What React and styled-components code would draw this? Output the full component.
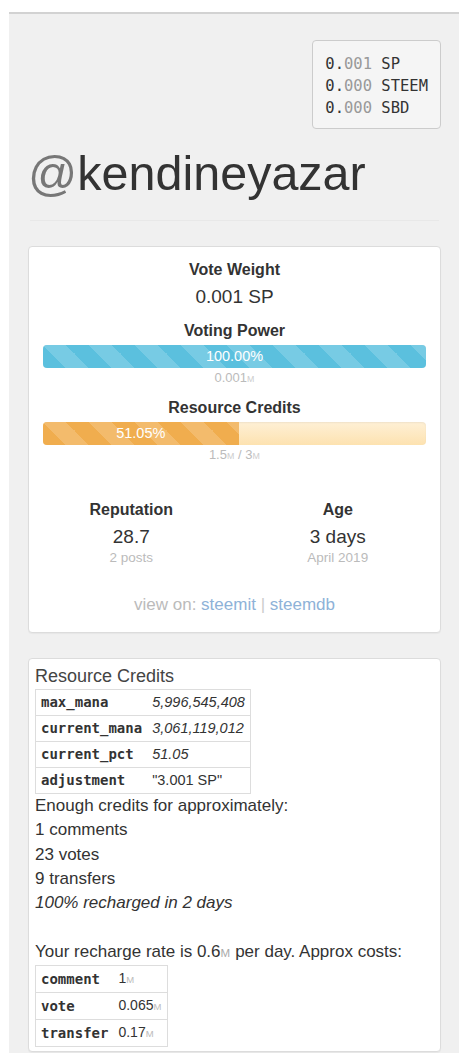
import React from "react";
import styled, { createGlobalStyle, css } from "styled-components";

const Global = createGlobalStyle`
  html, body { margin: 0; padding: 0; background: #fff; }
  body { font-family: "Liberation Sans", Arial, sans-serif; color: #333; }
  * { box-sizing: border-box; }
`;

const Page = styled.div`
  margin: 12px 9px 0;
  background: #f0f0f0;
  border-top: 2px solid #d2d2d2;
  padding: 0 18px 30px 19px;
  display: flex;
  flex-direction: column;
  min-height: 1060px;
`;

const Wallet = styled.div`
  align-self: flex-end;
  margin-top: 26px;
  padding: 12px 12px 9px;
  background: #f5f5f5;
  border: 1px solid #ccc;
  border-radius: 4px;
  font-family: "DejaVu Sans Mono", monospace;
  font-size: 15.5px;
  line-height: 22px;
  color: #333;
`;

const WalletLine = styled.div`
  white-space: pre;
`;

const Dim = styled.span`
  color: #999;
`;

const Title = styled.h1`
  margin: 18px 0 0;
  font-size: 48.5px;
  line-height: 53px;
  font-weight: normal;
  color: #333;
`;

const At = styled.span`
  color: #777;
`;

const Rule = styled.hr`
  margin: 20px 2px 0;
  border: 0;
  border-top: 1px solid #e8e8e8;
  height: 0;
`;

const Card = styled.div`
  margin-top: 25px;
  background: #fff;
  border: 1px solid #dcdcdc;
  border-radius: 4px;
  box-shadow: 0 1px 1px rgba(0, 0, 0, 0.04);
`;

const StatsCard = styled(Card)`
  padding: 12px 14px 17px;
  text-align: center;
`;

const Label = styled.div`
  font-weight: bold;
  font-size: 16px;
  line-height: 22px;
  color: #333;
  margin-top: ${(p) => p.$gap || 0}px;
`;

const Value = styled.div`
  font-size: 19px;
  line-height: 24px;
  color: #333;
  margin-top: 4px;
`;

const Sub = styled.div`
  font-size: 13px;
  line-height: 16px;
  color: #bbb;
  margin-top: 2px;
`;

const Unit = styled.span`
  font-size: 0.68em;
  color: ${(p) => p.$color || "#ccc"};
  letter-spacing: 0.02em;
`;

const stripes = css`
  background-image: linear-gradient(
    45deg,
    rgba(255, 255, 255, 0.17) 25%,
    transparent 25%,
    transparent 50%,
    rgba(255, 255, 255, 0.17) 50%,
    rgba(255, 255, 255, 0.17) 75%,
    transparent 75%,
    transparent
  );
  background-size: 46px 46px;
`;

const Bar = styled.div`
  margin-top: 3px;
  height: 23px;
  border-radius: 4px;
  overflow: hidden;
  display: flex;
  background: ${(p) => p.$track || "#f5f5f5"};
  box-shadow: inset 0 1px 2px rgba(0, 0, 0, 0.06);
`;

const Fill = styled.div`
  height: 100%;
  background-color: ${(p) => p.$color};
  ${stripes};
  color: #fff;
  font-size: 14.5px;
  line-height: 23px;
  text-align: center;
`;

const StatsRow = styled.div`
  display: grid;
  grid-template-columns: 1fr 1fr;
  margin: 35px -15px 0;
`;

const Stat = styled.div`
  text-align: center;
`;

const Note = styled.div`
  font-size: 13.5px;
  line-height: 18px;
  color: #bbb;
`;

const ViewOn = styled.div`
  margin-top: 28px;
  font-size: 17px;
  line-height: 20px;
  color: #bbb;
`;

const Link = styled.a`
  color: #8eb2d8;
  text-decoration: none;
`;

const Sep = styled.span`
  color: #ccc;
`;

const RcCard = styled(Card)`
  padding: 6px 6px 4px;
  font-size: 17px;
  line-height: 24.3px;
  color: #333;
`;

const RcTitle = styled.div`
  font-size: 18px;
  line-height: 22px;
  color: #444;
`;

const Table = styled.table`
  border-collapse: collapse;
  margin-top: ${(p) => p.$gap || 0}px;
  border: 1px solid #ddd;
`;

const Row = styled.tr`
  border-top: 1px solid #ddd;
  border-bottom: 1px solid #ddd;
`;

const Key = styled.td`
  padding: 2px 5px;
  line-height: 21px;
  font-family: "DejaVu Sans Mono", monospace;
  font-weight: bold;
  font-size: 14px;
  color: #333;
  white-space: nowrap;
`;

const Val = styled.td`
  padding: 2px 5px;
  line-height: 21px;
  font-size: ${(p) => p.$size || 14.5}px;
  font-style: ${(p) => (p.$italic ? "italic" : "normal")};
  color: #333;
  white-space: nowrap;
`;

const Text = styled.div`
  font-style: ${(p) => (p.$italic ? "italic" : "normal")};
`;

const rcRows = [
  ["max_mana", "5,996,545,408", true],
  ["current_mana", "3,061,119,012", true],
  ["current_pct", "51.05", true],
  ["adjustment", "\"3.001 SP\"", false],
];

const costRows = [
  ["comment", "1"],
  ["vote", "0.065"],
  ["transfer", "0.17"],
];

export default function App() {
  return (
    <>
      <Global />
      <Page>
        <Wallet>
          <WalletLine>
            0.<Dim>001</Dim> SP
          </WalletLine>
          <WalletLine>
            0.<Dim>000</Dim> STEEM
          </WalletLine>
          <WalletLine>
            0.<Dim>000</Dim> SBD
          </WalletLine>
        </Wallet>
        <Title>
          <At>@</At>kendineyazar
        </Title>
        <Rule />

        <StatsCard>
          <Label>Vote Weight</Label>
          <Value>0.001 SP</Value>
          <Label $gap={11}>Voting Power</Label>
          <Bar>
            <Fill $color="#5bc0de" style={{ width: "100%" }}>
              100.00%
            </Fill>
          </Bar>
          <Sub>
            0.001<Unit>M</Unit>
          </Sub>
          <Label $gap={10}>Resource Credits</Label>
          <Bar $track="linear-gradient(to bottom, #fef0d6, #fde2b0)">
            <Fill $color="#f0ad4e" style={{ width: "51.05%" }}>
              51.05%
            </Fill>
          </Bar>
          <Sub>
            1.5<Unit>M</Unit> / 3<Unit>M</Unit>
          </Sub>
          <StatsRow>
            <Stat>
              <Label>Reputation</Label>
              <Value>28.7</Value>
              <Note>2 posts</Note>
            </Stat>
            <Stat>
              <Label>Age</Label>
              <Value>3 days</Value>
              <Note>April 2019</Note>
            </Stat>
          </StatsRow>
          <ViewOn>
            view on: <Link href="#">steemit</Link> <Sep>|</Sep>{" "}
            <Link href="#">steemdb</Link>
          </ViewOn>
        </StatsCard>

        <RcCard>
          <RcTitle>Resource Credits</RcTitle>
          <Table $gap={2}>
            <tbody>
              {rcRows.map(([k, v, it]) => (
                <Row key={k}>
                  <Key>{k}</Key>
                  <Val $italic={it}>{v}</Val>
                </Row>
              ))}
            </tbody>
          </Table>
          <Text>Enough credits for approximately:</Text>
          <Text>1 comments</Text>
          <Text>23 votes</Text>
          <Text>9 transfers</Text>
          <Text $italic>100% recharged in 2 days</Text>
          <Text>&nbsp;</Text>
          <Text>
            Your recharge rate is 0.6<Unit $color="#aaa">M</Unit> per day. Approx
            costs:
          </Text>
          <Table>
            <tbody>
              {costRows.map(([k, v]) => (
                <Row key={k}>
                  <Key>{k}</Key>
                  <Val $size={14}>
                    {v}
                    <Unit $color="#bbb">M</Unit>
                  </Val>
                </Row>
              ))}
            </tbody>
          </Table>
        </RcCard>
      </Page>
    </>
  );
}
